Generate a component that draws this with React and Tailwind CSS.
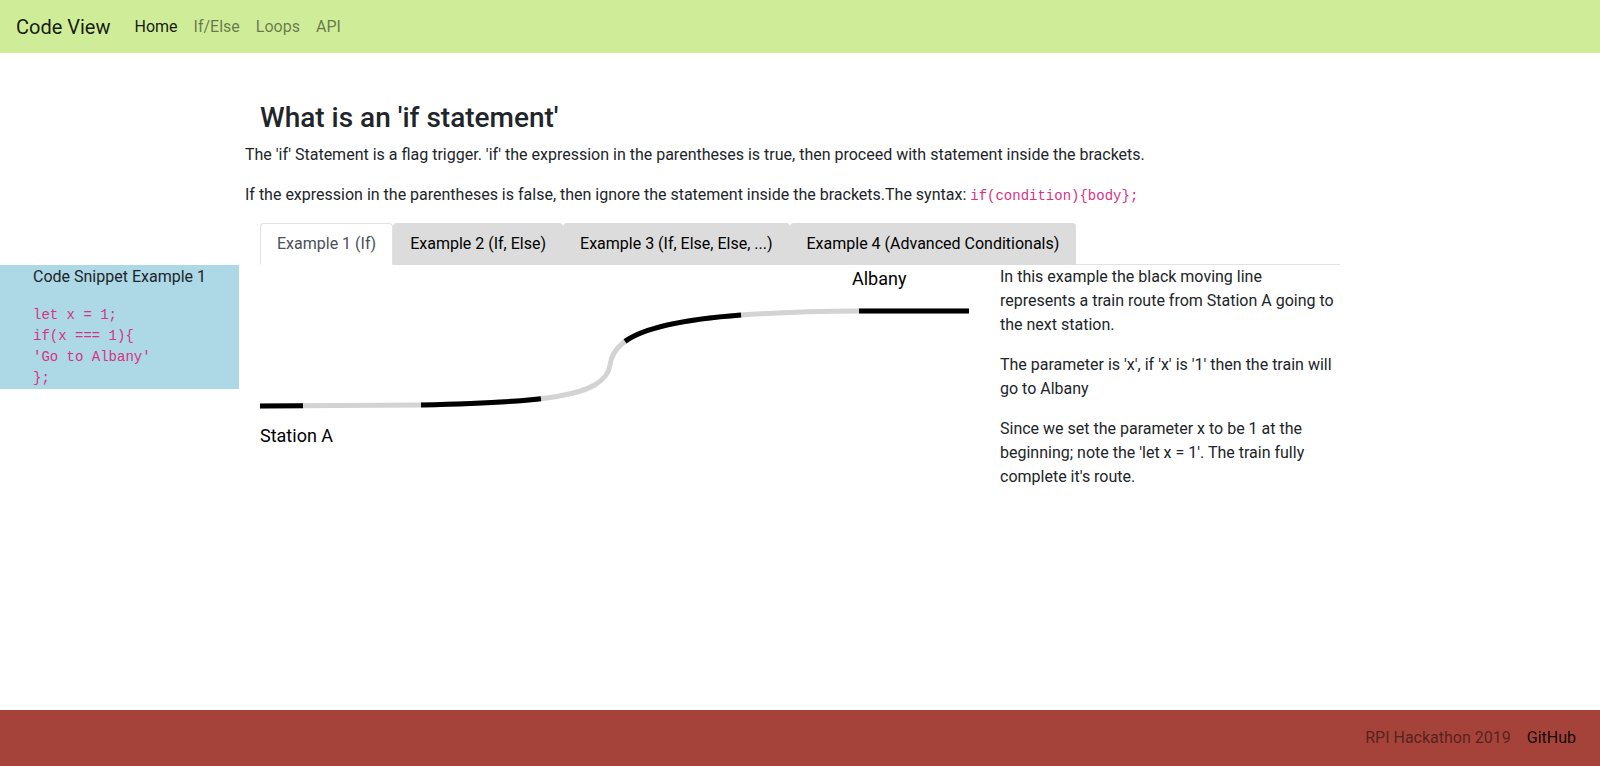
import { useState } from 'react';

const TABS = [
  'Example 1 (If)',
  'Example 2 (If, Else)',
  'Example 3 (If, Else, Else, ...)',
  'Example 4 (Advanced Conditionals)',
];

const NAV_LINKS = ['Home', 'If/Else', 'Loops', 'API'];

const TrainRoute = () => {
  const route = 'M0 141 L160 140 C280 137 345 133 350 100 C354 68 400 47 600 46 L709 46';
  return (
    <svg width="725" height="190" viewBox="0 0 725 190" className="block shrink-0">
      <path d={route} fill="none" stroke="#d3d3d3" strokeWidth="5" />
      <path
        d={route}
        fill="none"
        stroke="#000"
        strokeWidth="5"
        strokeDasharray="120 118 120 111 120 118 140 100"
        strokeDashoffset="77"
      />
      <text x="592" y="20" fontFamily="Roboto, sans-serif" fontSize="18" fill="#000">
        Albany
      </text>
      <text x="0" y="177" fontFamily="Roboto, sans-serif" fontSize="18" fill="#000">
        Station A
      </text>
    </svg>
  );
};

const App = () => {
  const [activeTab, setActiveTab] = useState(0);

  return (
    <div className="min-h-screen flex flex-col bg-white text-[#212529] font-['Roboto',sans-serif] text-base leading-6">
      {/* Navbar */}
      <nav className="h-[53px] bg-[#cfed98] flex items-center px-4">
        <span className="text-xl text-black/90 mr-4">Code View</span>
        {NAV_LINKS.map((link, i) => (
          <a
            key={link}
            href="#"
            className={`px-2 ${i === 0 ? 'text-black/90' : 'text-black/50'}`}
          >
            {link}
          </a>
        ))}
      </nav>

      {/* Intro */}
      <div className="pl-[245px] pt-[48px]">
        <h3 className="pl-[15px] text-[28px] leading-[34px] font-medium mb-2">
          What is an 'if statement'
        </h3>
        <p className="mb-4">
          The 'if' Statement is a flag trigger. 'if' the expression in the parentheses is true, then proceed with statement inside the brackets.
        </p>
        <p className="mb-4">
          If the expression in the parentheses is false, then ignore the statement inside the brackets.The syntax:{' '}
          <code className="font-['Liberation_Mono',monospace] text-sm text-[#d63384]">if(condition){'{'}body{'}'};</code>
        </p>

        {/* Tabs */}
        <div className="ml-[15px] w-[1080px] flex border-b border-[#dee2e6]">
          {TABS.map((tab, i) => (
            <button
              key={tab}
              onClick={() => setActiveTab(i)}
              className={`-mb-px px-4 py-2 border rounded-t ${
                activeTab === i
                  ? 'bg-white text-[#495057] border-[#dee2e6] border-b-white'
                  : 'bg-[#dcdcdc] text-black border-transparent'
              }`}
            >
              {tab}
            </button>
          ))}
        </div>
      </div>

      {/* Tab content */}
      <div className="flex items-start">
        <div className="w-[239px] bg-[#add8e6] pl-[33px]">
          <div>Code Snippet Example 1</div>
          <pre className="mt-4 font-['Liberation_Mono',monospace] text-sm leading-[21px] text-[#d63384]">
{`let x = 1;
if(x === 1){
'Go to Albany'
};`}
          </pre>
        </div>

        <div className="ml-[21px] flex">
          <TrainRoute />
          <div className="ml-[15px] w-[340px]">
            <p className="mb-4">
              In this example the black moving line represents a train route from Station A going to the next station.
            </p>
            <p className="mb-4">
              The parameter is 'x', if 'x' is '1' then the train will go to Albany
            </p>
            <p className="mb-4">
              Since we set the parameter x to be 1 at the beginning; note the 'let x = 1'. The train fully complete it's route.
            </p>
          </div>
        </div>
      </div>

      {/* Footer */}
      <footer className="mt-auto h-14 bg-[#a5433a] flex items-center justify-end pr-4">
        <span className="px-2 text-black/50">RPI Hackathon 2019</span>
        <a href="#" className="px-2 text-black/90">GitHub</a>
      </footer>
    </div>
  );
};

export default App;
